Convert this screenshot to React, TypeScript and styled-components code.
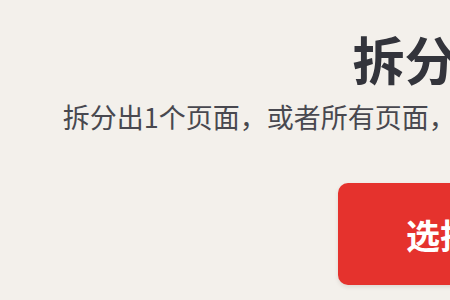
import React from 'react'
import styled, { createGlobalStyle } from 'styled-components'

const GlobalStyle = createGlobalStyle`
  html, body {
    margin: 0;
    padding: 0;
    background: #f3f0eb;
    overflow: hidden;
  }
  body {
    font-family: "Noto Sans CJK SC", "Noto Sans", sans-serif;
  }
`

const Viewport = styled.div`
  width: 450px;
  height: 300px;
  overflow: hidden;
`

const Hero = styled.section`
  width: 1015px;
  display: flex;
  flex-direction: column;
  align-items: center;
  padding-top: 29px;
`

const Title = styled.h1`
  margin: 0;
  font-size: 52px;
  line-height: 60px;
  font-weight: 700;
  color: #33343b;
  white-space: nowrap;
`

const Subtitle = styled.p`
  margin: 10px 0 0;
  padding-left: 13px;
  font-size: 27px;
  line-height: 36px;
  font-weight: 400;
  color: #48484f;
  white-space: nowrap;
`

const UploadButton = styled.button`
  margin-top: 48px;
  width: 340px;
  height: 102px;
  border: none;
  border-radius: 10px;
  background: #e5322d;
  color: #ffffff;
  font-family: inherit;
  font-size: 34px;
  font-weight: 700;
  box-shadow: 0 2px 4px rgba(72, 40, 30, 0.12);
  cursor: pointer;
`

export default function App() {
  return (
    <Viewport>
      <GlobalStyle />
      <Hero>
        <Title>拆分PDF文件</Title>
        <Subtitle>拆分出1个页面，或者所有页面，以便转换为单独的PDF文件，每页都独立。</Subtitle>
        <UploadButton>选择PDF文件</UploadButton>
      </Hero>
    </Viewport>
  )
}
